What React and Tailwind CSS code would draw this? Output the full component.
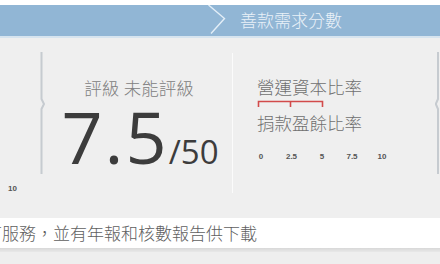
export default function App() {
  const cjk = { fontFamily: '"Open Sans", "Noto Sans CJK TC", sans-serif' };
  return (
    <div className="w-[440px] h-[264px] bg-[#efefef] overflow-hidden flex flex-col" style={cjk}>
      <div className="h-[5px] bg-white shrink-0" />
      <div className="h-[31px] bg-[#91b6d5] flex items-center shrink-0">
        <svg width="20" height="31" viewBox="0 0 20 31" className="ml-[207px] shrink-0">
          <path d="M1.5 0 L17.5 13.5 L4 28.5" fill="none" stroke="#e3eef7" strokeWidth="1.4" />
        </svg>
        <div className="ml-[13px] text-[17px] leading-none font-light text-[#e9f1f8]">善款需求分數</div>
      </div>
      <div className="h-[2px] bg-[#d6e4ef] shrink-0" />
      <div className="h-[180px] flex shrink-0">
        <div className="w-[41px] flex flex-col shrink-0">
          <div className="mt-[147px] ml-[8px] text-[8px] leading-none font-bold text-[#555]" style={{ fontFamily: '"Liberation Sans", sans-serif' }}>10</div>
        </div>
        <svg width="6" height="122" viewBox="0 0 6 122" className="mt-[14px] -ml-[1px] shrink-0">
          <path d="M1.5 0 V47 L4 52 L1.5 57 V122" fill="none" stroke="#c6cbd0" strokeWidth="2" />
        </svg>
        <div className="w-[186px] flex flex-col items-center pt-[40px] shrink-0">
          <div className="text-[17.5px] leading-[20px] font-light text-[#808080]">評級 未能評級</div>
          <div className="flex items-baseline mt-[2px] ml-[2px] text-[#3c3c3c]" style={{ fontFamily: '"Open Sans", sans-serif' }}>
            <span className="text-[72px] leading-none tracking-[2px]">7.5</span>
            <span className="text-[33px] leading-none">/50</span>
          </div>
        </div>
        <div className="w-px h-[140px] mt-[15px] bg-[#fbfbfb] shrink-0" />
        <div className="w-[202px] flex flex-col pl-[24px] pt-[39px] shrink-0">
          <div className="text-[17.5px] leading-[20px] font-light text-[#707070]">營運資本比率</div>
          <svg width="68" height="8" viewBox="0 0 68 8" className="mt-[3px] shrink-0">
            <path d="M1.5 7 V1.5 H65.5 V7 M33.5 1.5 V7" fill="none" stroke="#d24b4b" strokeWidth="1.6" />
          </svg>
          <div className="text-[17.5px] leading-[20px] font-light text-[#707070] mt-[5px]">捐款盈餘比率</div>
          <div className="flex -ml-[11px] mt-[20px] text-[8px] leading-none font-bold text-[#555]" style={{ fontFamily: '"Liberation Sans", sans-serif' }}>
            <span className="w-[30px] text-center">0</span>
            <span className="w-[31px] text-center">2.5</span>
            <span className="w-[30px] text-center">5</span>
            <span className="w-[30px] text-center">7.5</span>
            <span className="w-[30px] text-center">10</span>
          </div>
        </div>
        <svg width="5" height="122" viewBox="0 0 5 122" className="mt-[14px] shrink-0">
          <path d="M3 0 V47 L0.8 52 L3 57 V122" fill="none" stroke="#c6cbd0" strokeWidth="2" />
        </svg>
      </div>
      <div className="h-[30px] bg-white flex items-center overflow-hidden shrink-0">
        <div className="-ml-[15px] text-[17px] leading-none font-light text-[#606060] whitespace-nowrap">可服務，並有年報和核數報告供下載</div>
      </div>
      <div className="h-[4px] bg-gradient-to-b from-[#d8d8d8] to-[#e8e8e8] shrink-0" />
      <div className="flex-1 bg-[#eeeeee]" />
    </div>
  );
}
